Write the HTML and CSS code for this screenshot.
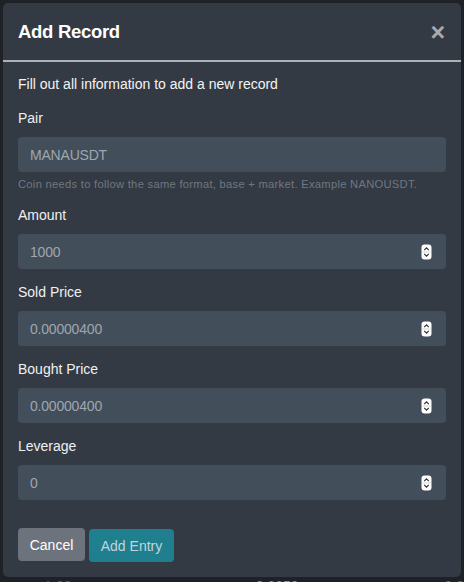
FILE: index.html
```html
<!DOCTYPE html>
<html lang="en">
<head>
<meta charset="utf-8">
<title>Add Record</title>
<link rel="stylesheet" href="styles.css">
</head>
<body>
<div class="modal">
  <div class="modal-header">
    <h5 class="modal-title">Add Record</h5>
    <span class="close">&times;</span>
  </div>
  <div class="modal-body">
    <p class="intro">Fill out all information to add a new record</p>
    <div class="group">
      <div class="label">Pair</div>
      <div class="field"><span class="value">MANAUSDT</span></div>
      <div class="help">Coin needs to follow the same format, base + market. Example NANOUSDT.</div>
    </div>
    <div class="group">
      <div class="label">Amount</div>
      <div class="field"><span class="value">1000</span>
        <svg class="spin" width="11" height="16" viewBox="0 0 11 16"><rect x="0.5" y="0.5" width="10" height="15" rx="3" fill="#fff"/><path d="M3.2 6.2 L5.5 3.9 L7.8 6.2" fill="none" stroke="#333" stroke-width="1.2"/><path d="M3.2 9.8 L5.5 12.1 L7.8 9.8" fill="none" stroke="#333" stroke-width="1.2"/><line x1="1.5" y1="8" x2="9.5" y2="8" stroke="#ccc" stroke-width="0.8"/></svg>
      </div>
    </div>
    <div class="group">
      <div class="label">Sold Price</div>
      <div class="field"><span class="value">0.00000400</span>
        <svg class="spin" width="11" height="16" viewBox="0 0 11 16"><rect x="0.5" y="0.5" width="10" height="15" rx="3" fill="#fff"/><path d="M3.2 6.2 L5.5 3.9 L7.8 6.2" fill="none" stroke="#333" stroke-width="1.2"/><path d="M3.2 9.8 L5.5 12.1 L7.8 9.8" fill="none" stroke="#333" stroke-width="1.2"/><line x1="1.5" y1="8" x2="9.5" y2="8" stroke="#ccc" stroke-width="0.8"/></svg>
      </div>
    </div>
    <div class="group">
      <div class="label">Bought Price</div>
      <div class="field"><span class="value">0.00000400</span>
        <svg class="spin" width="11" height="16" viewBox="0 0 11 16"><rect x="0.5" y="0.5" width="10" height="15" rx="3" fill="#fff"/><path d="M3.2 6.2 L5.5 3.9 L7.8 6.2" fill="none" stroke="#333" stroke-width="1.2"/><path d="M3.2 9.8 L5.5 12.1 L7.8 9.8" fill="none" stroke="#333" stroke-width="1.2"/><line x1="1.5" y1="8" x2="9.5" y2="8" stroke="#ccc" stroke-width="0.8"/></svg>
      </div>
    </div>
    <div class="group last">
      <div class="label">Leverage</div>
      <div class="field"><span class="value">0</span>
        <svg class="spin" width="11" height="16" viewBox="0 0 11 16"><rect x="0.5" y="0.5" width="10" height="15" rx="3" fill="#fff"/><path d="M3.2 6.2 L5.5 3.9 L7.8 6.2" fill="none" stroke="#333" stroke-width="1.2"/><path d="M3.2 9.8 L5.5 12.1 L7.8 9.8" fill="none" stroke="#333" stroke-width="1.2"/><line x1="1.5" y1="8" x2="9.5" y2="8" stroke="#ccc" stroke-width="0.8"/></svg>
      </div>
    </div>
  </div>
  <div class="modal-footer">
    <button class="btn btn-cancel">Cancel</button>
    <button class="btn btn-add">Add Entry</button>
  </div>
</div>
<div class="ticker">
  <span class="t-red">1.00</span>
  <span class="t-gray">0.6250</span>
  <span class="t-green">0.0</span>
</div>
</body>
</html>
```

FILE: styles.css
```css
html, body {
  margin: 0;
  padding: 0;
}
body {
  background: #1e2227;
  font-family: "Liberation Sans", Arial, sans-serif;
  font-size: 14px;
  color: #f1f2f3;
  width: 464px;
  height: 582px;
  overflow: hidden;
}
.modal {
  margin: 3px 3px 0 3px;
  width: 458px;
  height: 574px;
  box-sizing: border-box;
  background: #343a44;
  border-radius: 5px;
  display: flex;
  flex-direction: column;
}
.modal-header {
  height: 57px;
  border-bottom: 2px solid #aeb2b6;
  display: flex;
  align-items: center;
  justify-content: space-between;
  padding: 0 16px 0 15px;
  flex: none;
}
.modal-title {
  margin: 0;
  font-size: 18.5px;
  font-weight: 700;
  color: #ffffff;
  letter-spacing: -0.3px;
}
.close {
  font-size: 25px;
  font-weight: 700;
  color: #a7abaf;
  line-height: 1;
  margin-top: 1px;
}
.modal-body {
  padding: 12px 15px 0 15px;
}
.intro {
  margin: 0 0 13px 0;
  line-height: 21px;
  color: #f3f4f5;
}
.group {
  margin-bottom: 13px;
}
.group.last {
  margin-bottom: 0;
}
.label {
  line-height: 21px;
  margin-bottom: 8px;
  color: #eef0f2;
}
.field {
  height: 35px;
  box-sizing: border-box;
  background: #434e5b;
  border-radius: 4px;
  padding: 0 14px 0 12px;
  display: flex;
  align-items: center;
  justify-content: space-between;
}
.value {
  color: #9ea6ae;
  font-size: 14px;
  letter-spacing: -0.2px;
}
.spin {
  display: block;
}
.help {
  margin-top: 4px;
  font-size: 11.2px;
  line-height: 17px;
  letter-spacing: 0.28px;
  color: #6f7882;
}
.group:first-of-type {
  margin-bottom: 12px;
}
.modal-footer {
  padding: 28px 15px 0 15px;
  display: flex;
  align-items: flex-start;
  gap: 4px;
}
.btn {
  border: none;
  font-family: "Liberation Sans", Arial, sans-serif;
  font-size: 14px;
  height: 33px;
  border-radius: 4px;
  padding: 0;
}
.btn-cancel {
  width: 67px;
  background: #6c737d;
  color: #ffffff;
}
.btn-add {
  width: 85px;
  margin-top: 1px;
  background: #207f8e;
  color: #c0d5da;
}
.ticker {
  height: 5px;
  font-size: 14px;
  line-height: 14px;
  padding-top: 2px;
  display: flex;
}
.t-red { color: #b3343a; margin-left: 44px; width: 213px; }
.t-gray { color: #8b9096; width: 190px; }
.t-green { color: #2e8a6a; }
```
